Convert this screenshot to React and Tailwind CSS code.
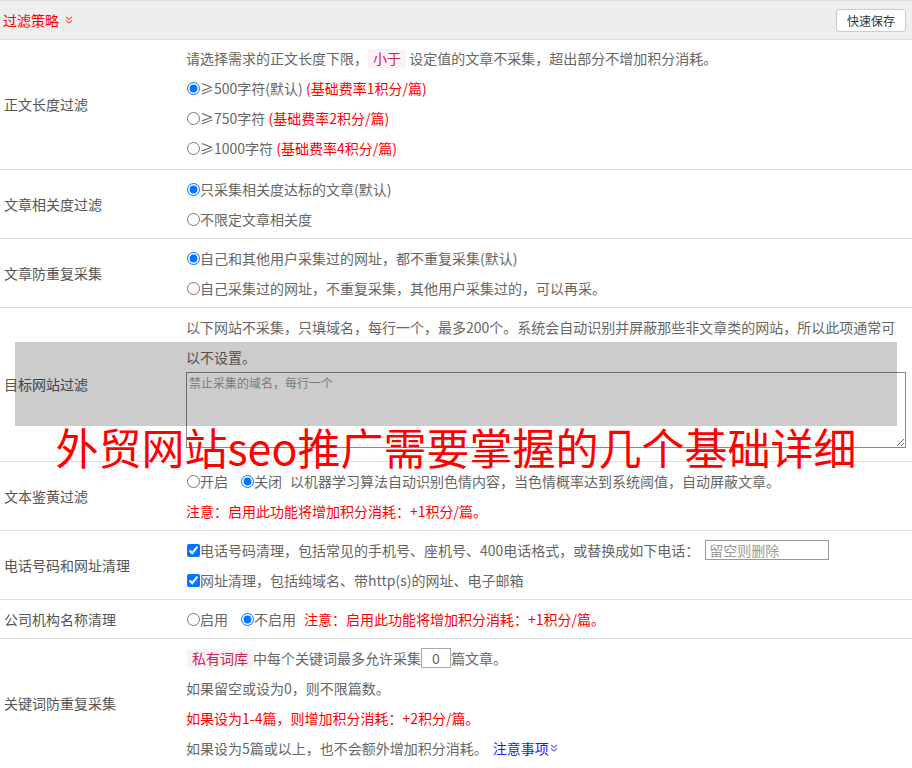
function DoubleDown({ className }) {
  return (
    <svg viewBox="0 0 8 8" className={className} fill="none" stroke="currentColor" strokeWidth="1.2">
      <polyline points="1,1 4,3.5 7,1" />
      <polyline points="1,4.5 4,7 7,4.5" />
    </svg>
  );
}

function Line({ children, className = "" }) {
  return <div className={"flex h-[30px] items-center whitespace-nowrap " + className}>{children}</div>;
}

function Radio({ checked, name, children, className = "" }) {
  return (
    <label className={"flex items-center " + className}>
      <input type="radio" name={name} defaultChecked={checked} className="m-0 ml-px h-[13px] w-[13px]" />
      <span>{children}</span>
    </label>
  );
}

function Check({ children }) {
  return (
    <label className="flex items-center">
      <input type="checkbox" defaultChecked className="m-0 ml-px h-[13px] w-[13px]" />
      <span>{children}</span>
    </label>
  );
}

function Badge({ children }) {
  return (
    <span className="inline-block rounded-[4px] bg-[#f9f2f4] px-[5px] leading-[19px] text-[#c7254e]">{children}</span>
  );
}

function Row({ label, children, last, className = "py-1" }) {
  return (
    <div className={"flex " + (last ? "" : "border-b border-[#ddd]")}>
      <div className="flex w-[186px] shrink-0 items-center pl-1 text-[#555]">{label}</div>
      <div className={"min-w-0 flex-1 pr-[6px] leading-[30px] " + className}>{children}</div>
    </div>
  );
}

export default function App() {
  return (
    <div className="relative h-[768px] w-[912px] overflow-hidden bg-white font-['Noto_Sans_CJK_SC','Noto_Sans',sans-serif] text-[14px] text-[#666]">
      <div className="flex h-10 items-center justify-between border-y border-[#ddd] bg-[#eeeeee] pl-[3px] pr-[6px]">
        <div className="flex items-center text-[#ff0000]">
          <span>过滤策略</span>
          <DoubleDown className="ml-[6px] h-[8px] w-[8px] text-[#ff5a5a]" />
        </div>
        <button className="h-[23px] rounded-[3px] border border-[#ccc] bg-white px-[10px] text-[12px] leading-[21px] text-[#333]">
          快速保存
        </button>
      </div>

      <Row label="正文长度过滤" className="pt-[3px] pb-[6px]">
        <Line>请选择需求的正文长度下限，<Badge>小于</Badge>&nbsp;设定值的文章不采集，超出部分不增加积分消耗。</Line>
        <Line><Radio name="len" checked>≥500字符(默认) <span className="text-[#ff0000]">(基础费率1积分/篇)</span></Radio></Line>
        <Line><Radio name="len">≥750字符 <span className="text-[#ff0000]">(基础费率2积分/篇)</span></Radio></Line>
        <Line><Radio name="len">≥1000字符 <span className="text-[#ff0000]">(基础费率4积分/篇)</span></Radio></Line>
      </Row>

      <Row label="文章相关度过滤">
        <Line><Radio name="rel" checked>只采集相关度达标的文章(默认)</Radio></Line>
        <Line><Radio name="rel">不限定文章相关度</Radio></Line>
      </Row>

      <Row label="文章防重复采集">
        <Line><Radio name="dup" checked>自己和其他用户采集过的网址，都不重复采集(默认)</Radio></Line>
        <Line><Radio name="dup">自己采集过的网址，不重复采集，其他用户采集过的，可以再采。</Radio></Line>
      </Row>

      <Row label="目标网站过滤">
        <div>以下网站不采集，只填域名，每行一个，最多200个。系统会自动识别并屏蔽那些非文章类的网站，所以此项通常可以不设置。</div>
        <textarea
          placeholder="禁止采集的域名，每行一个"
          className="mb-[9px] block h-[76px] w-full border border-[#888] px-[2px] py-[1px] text-[12px] leading-[18px] placeholder:text-[#999]"
        />
      </Row>

      <Row label="文本鉴黄过滤">
        <Line>
          <Radio name="porn" className="mr-3">开启</Radio>
          <Radio name="porn" checked className="mr-2">关闭</Radio>
          <span>以机器学习算法自动识别色情内容，当色情概率达到系统阈值，自动屏蔽文章。</span>
        </Line>
        <Line className="text-[#ff0000]">注意：启用此功能将增加积分消耗：+1积分/篇。</Line>
      </Row>

      <Row label="电话号码和网址清理">
        <Line>
          <Check>电话号码清理，包括常见的手机号、座机号、400电话格式，或替换成如下电话：</Check>
          <input
            placeholder="留空则删除"
            className="ml-[6px] h-[20px] w-[124px] border border-[#999] px-[3px] text-[14px] leading-[18px] placeholder:text-[#999]"
          />
        </Line>
        <Line><Check>网址清理，包括纯域名、带http(s)的网址、电子邮箱</Check></Line>
      </Row>

      <Row label="公司机构名称清理">
        <Line>
          <Radio name="org" className="mr-3">启用</Radio>
          <Radio name="org" checked className="mr-2">不启用</Radio>
          <span className="text-[#ff0000]">注意：启用此功能将增加积分消耗：+1积分/篇。</span>
        </Line>
      </Row>

      <Row label="关键词防重复采集" last>
        <Line>
          <span className="ml-px"><Badge>私有词库</Badge></span>
          <span>中每个关键词最多允许采集</span>
          <input
            defaultValue="0"
            className="h-[20px] w-[30px] border border-[#aaa] text-center text-[14px] leading-[18px] text-[#666]"
          />
          <span>篇文章。</span>
        </Line>
        <Line>如果留空或设为0，则不限篇数。</Line>
        <Line className="text-[#ff0000]">如果设为1-4篇，则增加积分消耗：+2积分/篇。</Line>
        <Line>
          <span>如果设为5篇或以上，也不会额外增加积分消耗。</span>
          <a className="ml-[5px] flex items-center text-[#1a1aff]">
            注意事项
            <DoubleDown className="ml-px h-[8px] w-[8px] text-[#6b6bff]" />
          </a>
        </Line>
      </Row>

      <div className="absolute left-[15px] top-[342px] h-[84px] w-[882px] bg-black/20" />
      <div className="absolute left-0 right-0 top-[421px] text-center text-[43px] leading-[50px] text-[#ff0000]">
        外贸网站seo推广需要掌握的几个基础详细
      </div>
    </div>
  );
}
